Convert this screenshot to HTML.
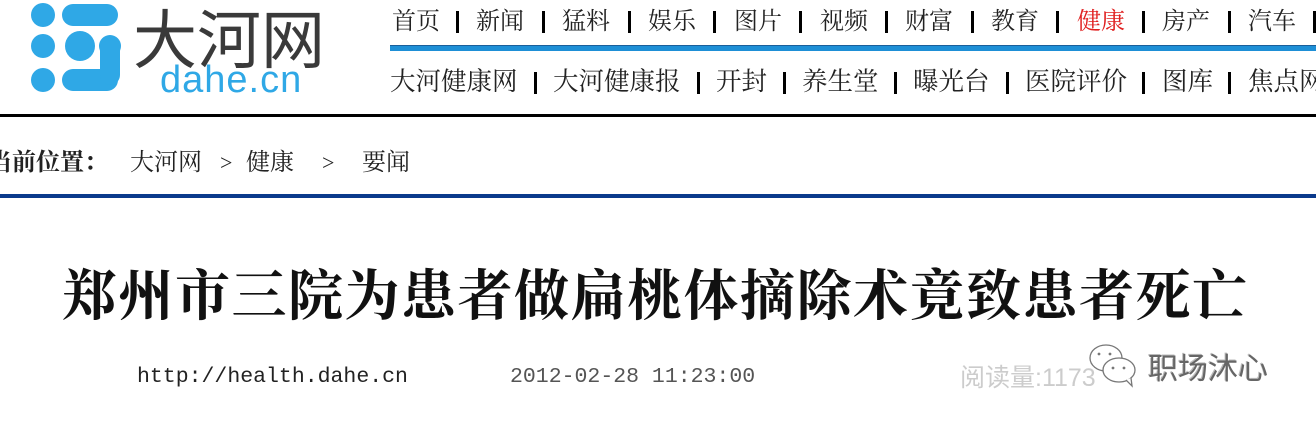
<!DOCTYPE html>
<html><head><meta charset="utf-8"><style>
body{margin:0;width:1316px;height:421px;background:#fff;position:relative;overflow:hidden;font-family:"Liberation Serif","Noto Serif CJK SC",serif;}
.a{position:absolute;white-space:nowrap;}
.n{position:absolute;font-size:24px;color:#222;line-height:24px;white-space:nowrap;}
.r{font-size:25.5px;}
.s{position:absolute;width:3px;height:22px;background:#000;}
</style></head><body>
<svg class="a" style="left:25px;top:0" width="110" height="100" viewBox="25 0 110 100">
<g fill="#2fa8e6">
<circle cx="43" cy="15" r="12"/>
<rect x="62" y="4" width="56" height="22" rx="11"/>
<circle cx="43" cy="46" r="12"/>
<circle cx="80" cy="46" r="15"/>
<circle cx="110" cy="46" r="11"/>
<circle cx="43" cy="80" r="12"/>
<rect x="62" y="69" width="56" height="22" rx="11"/>
<rect x="100" y="40" width="20" height="45" rx="10"/>
</g></svg>
<div class="a" style="left:133px;top:-10px;font-size:64px;color:#3a3a3a;font-family:'Liberation Sans','Noto Sans CJK SC',sans-serif;">大河网</div>
<div class="a" style="left:160px;top:59px;font-size:38px;color:#2fa8e6;font-family:'Liberation Sans',sans-serif;letter-spacing:1px;">dahe.cn</div>

<div class="n" style="left:392px;top:10px">首页</div><div class="s" style="left:456px;top:11px"></div>
<div class="n" style="left:476px;top:10px">新闻</div><div class="s" style="left:542px;top:11px"></div>
<div class="n" style="left:562px;top:10px">猛料</div><div class="s" style="left:628px;top:11px"></div>
<div class="n" style="left:648px;top:10px">娱乐</div><div class="s" style="left:713px;top:11px"></div>
<div class="n" style="left:734px;top:10px">图片</div><div class="s" style="left:799px;top:11px"></div>
<div class="n" style="left:820px;top:10px">视频</div><div class="s" style="left:885px;top:11px"></div>
<div class="n" style="left:905px;top:10px">财富</div><div class="s" style="left:971px;top:11px"></div>
<div class="n" style="left:991px;top:10px">教育</div><div class="s" style="left:1056px;top:11px"></div>
<div class="n" style="left:1077px;top:10px;color:#e02020">健康</div><div class="s" style="left:1142px;top:11px"></div>
<div class="n" style="left:1162px;top:10px">房产</div><div class="s" style="left:1228px;top:11px"></div>
<div class="n" style="left:1248px;top:10px">汽车</div><div class="s" style="left:1313px;top:11px"></div>

<div class="a" style="left:390px;top:45px;width:926px;height:5px;background:#1e8fd6;border-top:1px solid #1a5f9a;"></div>

<div class="n r" style="left:390px;top:70px">大河健康网</div><div class="s" style="left:534px;top:72px"></div>
<div class="n r" style="left:553px;top:70px">大河健康报</div><div class="s" style="left:697px;top:72px"></div>
<div class="n r" style="left:716px;top:70px">开封</div><div class="s" style="left:783px;top:72px"></div>
<div class="n r" style="left:802px;top:70px">养生堂</div><div class="s" style="left:894px;top:72px"></div>
<div class="n r" style="left:913px;top:70px">曝光台</div><div class="s" style="left:1006px;top:72px"></div>
<div class="n r" style="left:1025px;top:70px">医院评价</div><div class="s" style="left:1142px;top:72px"></div>
<div class="n r" style="left:1162px;top:70px">图库</div><div class="s" style="left:1228px;top:72px"></div>
<div class="n r" style="left:1248px;top:70px">焦点网</div>

<div class="a" style="left:0;top:114px;width:1316px;height:3px;background:#000;"></div>
<div class="n" style="left:-12px;top:151px;font-weight:bold">当前位置：</div>
<div class="n" style="left:130px;top:151px">大河网</div>
<div class="n" style="left:220px;top:151px;font-size:22px">&gt;</div>
<div class="n" style="left:246px;top:151px">健康</div>
<div class="n" style="left:322px;top:151px;font-size:22px">&gt;</div>
<div class="n" style="left:362px;top:151px">要闻</div>
<div class="a" style="left:0;top:194px;width:1316px;height:4px;background:#0a3a8c;"></div>
<div class="a" style="left:62px;top:252px;font-size:55px;font-weight:bold;color:#111;letter-spacing:1.5px;">郑州市三院为患者做扁桃体摘除术竟致患者死亡</div>
<div class="a" style="left:137px;top:365px;font-size:21.5px;color:#222;font-family:'Liberation Mono',monospace;">http://health.dahe.cn</div>
<div class="a" style="left:510px;top:365px;font-size:21.5px;color:#555;font-family:'Liberation Mono',monospace;">2012-02-28 11:23:00</div>
<div class="a" style="left:960px;top:358px;font-size:25px;color:#ccc;font-family:'Liberation Sans','Noto Sans CJK SC',sans-serif;">阅读量:1173</div>
<svg class="a" style="left:1088px;top:343px" width="56" height="45" viewBox="0 0 56 45"><g fill="#fff" stroke="#777" stroke-width="1.3"><ellipse cx="18" cy="15" rx="16" ry="13"/><ellipse cx="31" cy="27" rx="16" ry="12"/><path d="M38 37 l6 6 l-1 -8"/></g><g fill="#777"><circle cx="11" cy="11" r="1.4"/><circle cx="22" cy="11" r="1.4"/><circle cx="25" cy="25" r="1.4"/><circle cx="36" cy="25" r="1.4"/></g></svg>
<div class="a" style="left:1148px;top:344px;font-size:30px;color:#666;font-family:'Liberation Sans','Noto Sans CJK SC',sans-serif;text-shadow:1px 1px 0 #fff,-1px -1px 0 #bbb;">职场沐心</div>
</body></html>
